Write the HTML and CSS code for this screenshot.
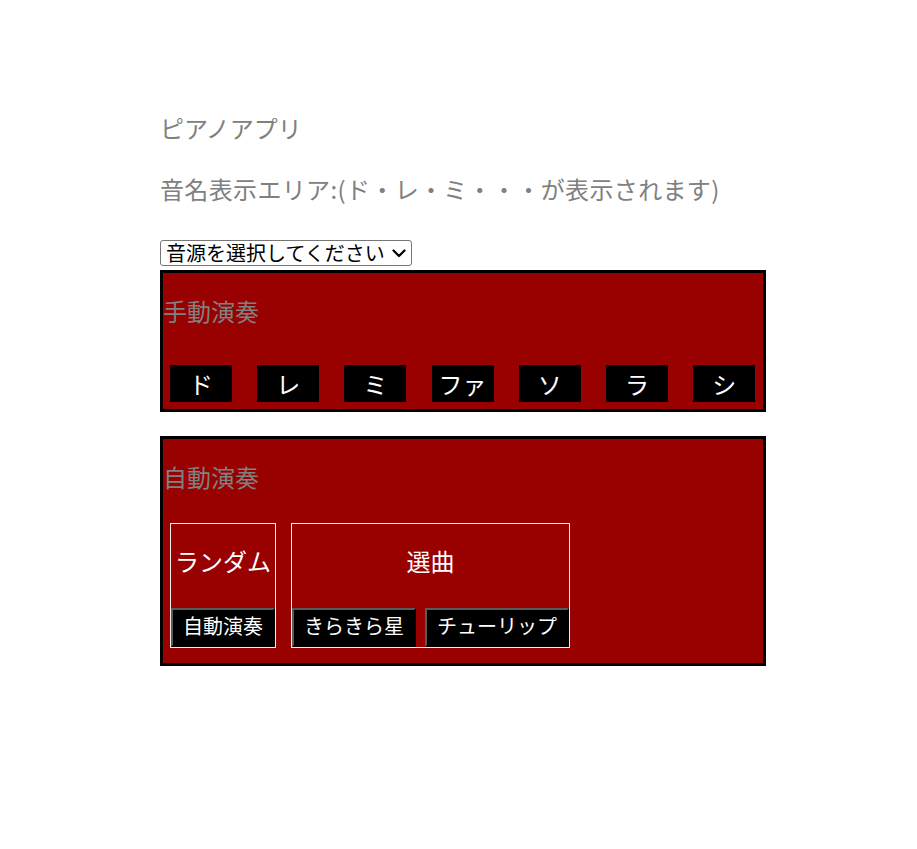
FILE: index.html
```html
<!DOCTYPE html>
<html lang="ja">
<head>
<meta charset="utf-8">
<title>ピアノアプリ</title>
<link rel="stylesheet" href="styles.css">
</head>
<body>
<div class="app">
  <h1 class="title">ピアノアプリ</h1>
  <h2 class="note-display">音名表示エリア:(ド・レ・ミ・・・が表示されます)</h2>
  <div class="select-wrap">
    <select class="source-select">
      <option>音源を選択してください</option>
    </select>
    <svg class="select-arrow" width="14" height="9" viewBox="0 0 14 9" aria-hidden="true">
      <path d="M1.5 1.5 L7 7 L12.5 1.5" fill="none" stroke="#000" stroke-width="2.2" stroke-linecap="round" stroke-linejoin="round"/>
    </svg>
  </div>

  <section class="panel manual">
    <p class="panel-title">手動演奏</p>
    <div class="keys">
      <button class="key">ド</button>
      <button class="key">レ</button>
      <button class="key">ミ</button>
      <button class="key">ファ</button>
      <button class="key">ソ</button>
      <button class="key">ラ</button>
      <button class="key">シ</button>
    </div>
  </section>

  <section class="panel auto">
    <p class="panel-title">自動演奏</p>
    <div class="groups">
      <div class="group">
        <p class="group-label">ランダム</p>
        <div class="group-buttons">
          <button class="play-btn">自動演奏</button>
        </div>
      </div>
      <div class="group">
        <p class="group-label">選曲</p>
        <div class="group-buttons">
          <button class="play-btn">きらきら星</button>
          <button class="play-btn">チューリップ</button>
        </div>
      </div>
    </div>
  </section>
</div>
</body>
</html>
```

FILE: styles.css
```css
html, body {
  margin: 0;
  padding: 0;
  background: #ffffff;
}

body {
  font-family: "Noto Sans CJK JP", "Noto Sans", sans-serif;
}

.app {
  margin-left: 160px;
  padding-top: 112px;
  width: 606px;
}

.title {
  margin: 0;
  font-size: 24px;
  line-height: 32px;
  font-weight: normal;
  color: #808080;
}

.note-display {
  margin: 29px 0 0;
  font-size: 24px;
  line-height: 32px;
  font-weight: normal;
  color: #808080;
  white-space: nowrap;
  letter-spacing: 0.35px;
}

.select-wrap {
  position: relative;
  width: 252px;
  margin-top: 35px;
}

.source-select {
  display: block;
  width: 252px;
  height: 26px;
  padding: 0 0 0 5px;
  -webkit-appearance: none;
  appearance: none;
  font-family: "Noto Sans CJK JP", sans-serif;
  font-size: 20px;
  line-height: 24px;
  color: #000;
  background: #fff;
  border: 1px solid #767676;
  border-radius: 3px;
}

.select-arrow {
  position: absolute;
  left: 232px;
  top: 9px;
  pointer-events: none;
}

.panel {
  margin-top: 4px;
  border: 3px solid #000;
  background: #990000;
}

.panel.auto {
  margin-top: 24px;
  padding-bottom: 15px;
}

.panel.manual {
  padding-bottom: 7px;
}

.panel-title {
  margin: 0;
  padding-top: 22px;
  padding-bottom: 2px;
  font-size: 24px;
  line-height: 32px;
  color: #808080;
}

.keys {
  display: flex;
  gap: 25.2px;
  margin-top: 36px;
  padding-left: 7px;
}

.key {
  width: 62px;
  height: 37px;
  padding: 0;
  border: none;
  background: #000;
  color: #fff;
  font-family: "Noto Sans CJK JP", sans-serif;
  font-size: 24px;
  line-height: 35px;
}

.groups {
  display: flex;
  align-items: flex-start;
  gap: 15px;
  margin-top: 28px;
  padding-left: 7px;
}

.group {
  border: 1px solid #f0f0f0;
}

.group-label {
  margin: 0;
  padding: 21px 0 31px;
  font-size: 24px;
  line-height: 32px;
  color: #fff;
  text-align: center;
  white-space: nowrap;
}

.group-buttons {
  display: flex;
  gap: 9px;
}

.play-btn {
  padding: 1px 10px 5px;
  border: 2px solid;
  border-color: #5a5a5a #000 #000 #5a5a5a;
  background: #000;
  color: #fff;
  font-family: "Noto Sans CJK JP", sans-serif;
  font-size: 20px;
  line-height: 29px;
  white-space: nowrap;
}
```
